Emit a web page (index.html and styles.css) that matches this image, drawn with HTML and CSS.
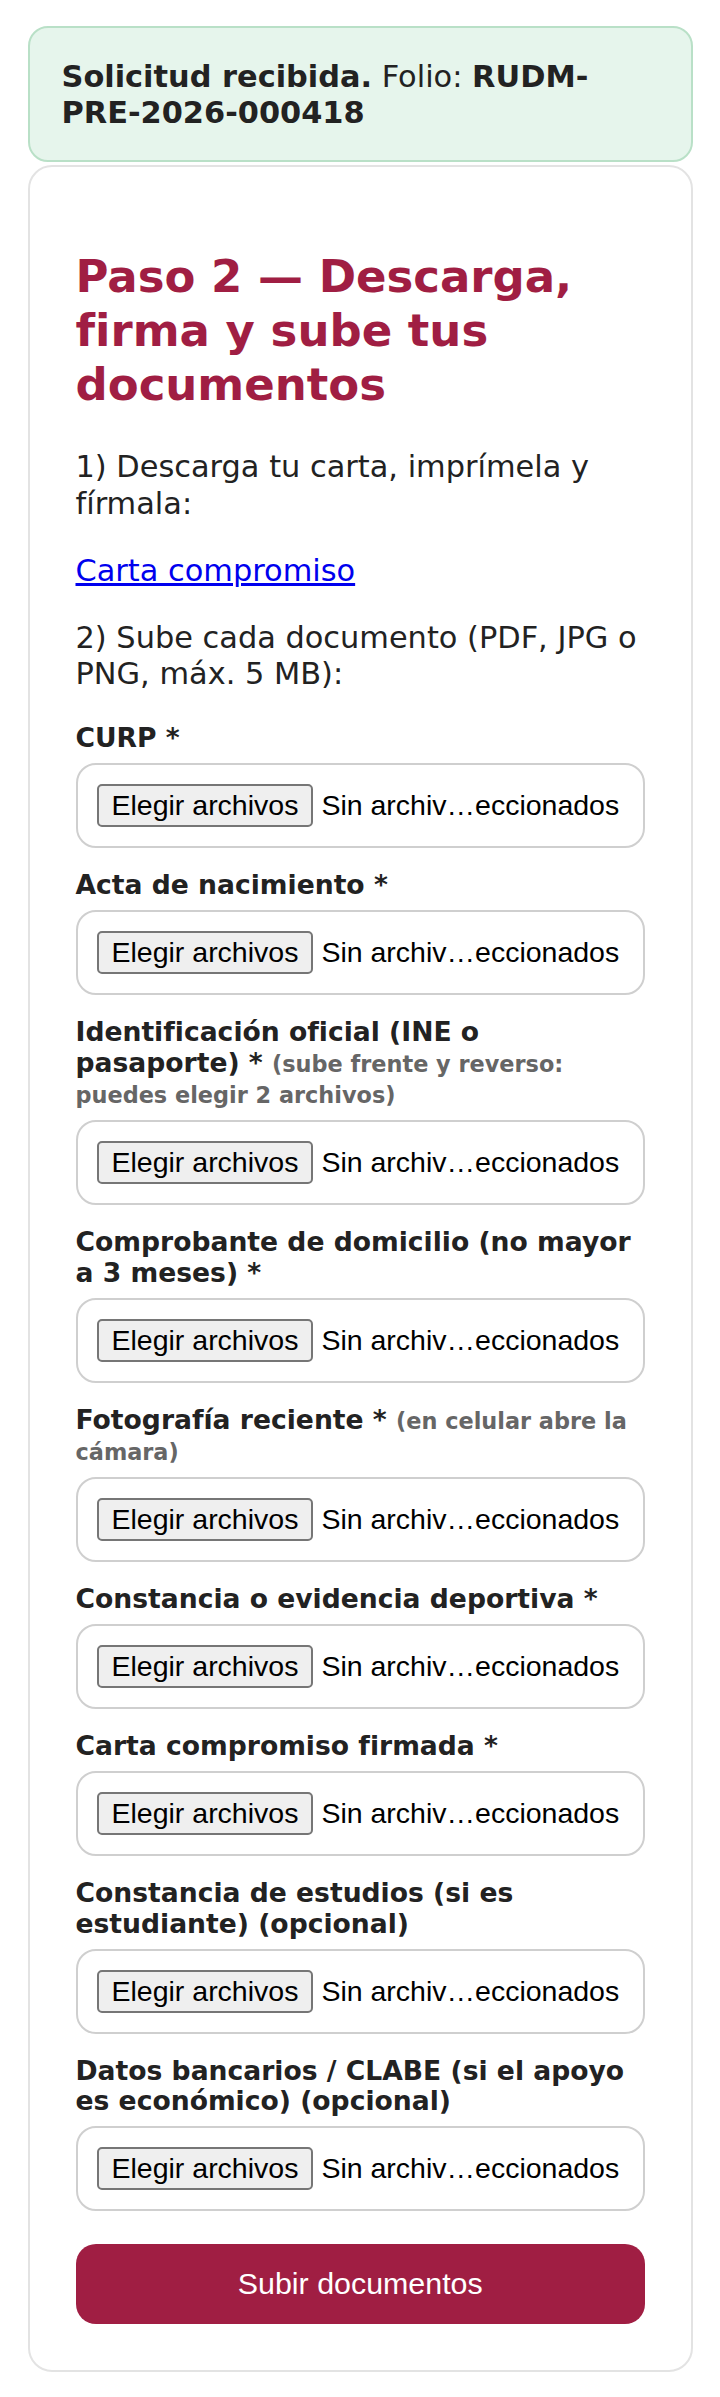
FILE: index.html
```html
<!DOCTYPE html>
<html lang="es">
<head>
<meta charset="utf-8">
<title>Paso 2 — Descarga, firma y sube tus documentos</title>
<link rel="stylesheet" href="styles.css">
</head>
<body>
<div class="page">
  <div class="notice"><strong>Solicitud recibida.</strong> Folio: <strong>RUDM-PRE-2026-000418</strong></div>
  <div class="card">
    <h2>Paso 2 — Descarga, firma y sube tus documentos</h2>
    <p>1) Descarga tu carta, imprímela y fírmala:</p>
    <p><a href="#">Carta compromiso</a></p>
    <p>2) Sube cada documento (PDF, JPG o PNG, máx. 5 MB):</p>
    <form class="form">
      <div class="field">
        <label class="label">CURP *</label>
        <div class="file"><button type="button" class="file-btn">Elegir archivos</button><span class="file-name">Sin archiv…eccionados</span></div>
      </div>
      <div class="field">
        <label class="label">Acta de nacimiento *</label>
        <div class="file"><button type="button" class="file-btn">Elegir archivos</button><span class="file-name">Sin archiv…eccionados</span></div>
      </div>
      <div class="field">
        <label class="label">Identificación oficial (INE o pasaporte) * <span class="hint">(sube frente y reverso: puedes elegir 2 archivos)</span></label>
        <div class="file"><button type="button" class="file-btn">Elegir archivos</button><span class="file-name">Sin archiv…eccionados</span></div>
      </div>
      <div class="field">
        <label class="label">Comprobante de domicilio (no mayor a 3 meses) *</label>
        <div class="file"><button type="button" class="file-btn">Elegir archivos</button><span class="file-name">Sin archiv…eccionados</span></div>
      </div>
      <div class="field">
        <label class="label">Fotografía reciente * <span class="hint">(en celular abre la cámara)</span></label>
        <div class="file"><button type="button" class="file-btn">Elegir archivos</button><span class="file-name">Sin archiv…eccionados</span></div>
      </div>
      <div class="field">
        <label class="label">Constancia o evidencia deportiva *</label>
        <div class="file"><button type="button" class="file-btn">Elegir archivos</button><span class="file-name">Sin archiv…eccionados</span></div>
      </div>
      <div class="field">
        <label class="label">Carta compromiso firmada *</label>
        <div class="file"><button type="button" class="file-btn">Elegir archivos</button><span class="file-name">Sin archiv…eccionados</span></div>
      </div>
      <div class="field">
        <label class="label">Constancia de estudios (si es estudiante) (opcional)</label>
        <div class="file"><button type="button" class="file-btn">Elegir archivos</button><span class="file-name">Sin archiv…eccionados</span></div>
      </div>
      <div class="field">
        <label class="label">Datos bancarios / CLABE (si el apoyo es económico) (opcional)</label>
        <div class="file"><button type="button" class="file-btn">Elegir archivos</button><span class="file-name">Sin archiv…eccionados</span></div>
      </div>
      <button type="button" class="submit">Subir documentos</button>
    </form>
  </div>
</div>
</body>
</html>
```
FILE: styles.css
```css
* { box-sizing: border-box; }

body {
  margin: 0;
  background: #fff;
  color: #222;
  font-family: "DejaVu Sans", sans-serif;
  line-height: 1.2;
}

.page {
  padding: 26px 27px 19px 27.5px;
}

.notice {
  background: #e6f5ec;
  border: 2px solid #b9e0c7;
  border-radius: 20px;
  padding: 31px 32px 28px;
  font-size: 30.4px;
  margin-bottom: 3px;
}

.card {
  border: 2px solid #e3e3e3;
  border-radius: 24px;
  padding: 46px;
}

.card h2 {
  font-size: 45px;
  line-height: 54px;
  color: #a01e43;
  margin: 37px 0;
}

.card p {
  font-size: 30.4px;
  line-height: 36.6px;
  margin: 30.4px 0;
}

.card a {
  color: #0000ee;
}

.form {
  display: flex;
  flex-direction: column;
}

.field {
  margin-bottom: 22.2px;
}

.label {
  display: block;
  font-size: 26.6px;
  font-weight: bold;
  line-height: 30.4px;
  margin-bottom: 9.5px;
}

.hint {
  font-size: 22.4px;
  color: #666;
}

.file {
  display: flex;
  align-items: center;
  gap: 8px;
  border: 2px solid #cfcfcf;
  border-radius: 20px;
  padding: 19px 20px 19px 19px;
  font-family: "Liberation Sans", Arial, sans-serif;
  font-size: 28.5px;
  color: #000;
  white-space: nowrap;
}

.file-btn {
  font: inherit;
  line-height: 33px;
  padding: 3px 13px;
  border: 2px solid #767676;
  border-radius: 5px;
  background: #efefef;
  color: #000;
  flex: none;
}

.file-name {
  line-height: 33px;
}

.submit {
  display: block;
  width: 100%;
  height: 80px;
  margin-top: 10.5px;
  background: #a01e43;
  color: #fff;
  border: 0;
  border-radius: 20px;
  font-family: "Liberation Sans", Arial, sans-serif;
  font-size: 30.4px;
}
```
